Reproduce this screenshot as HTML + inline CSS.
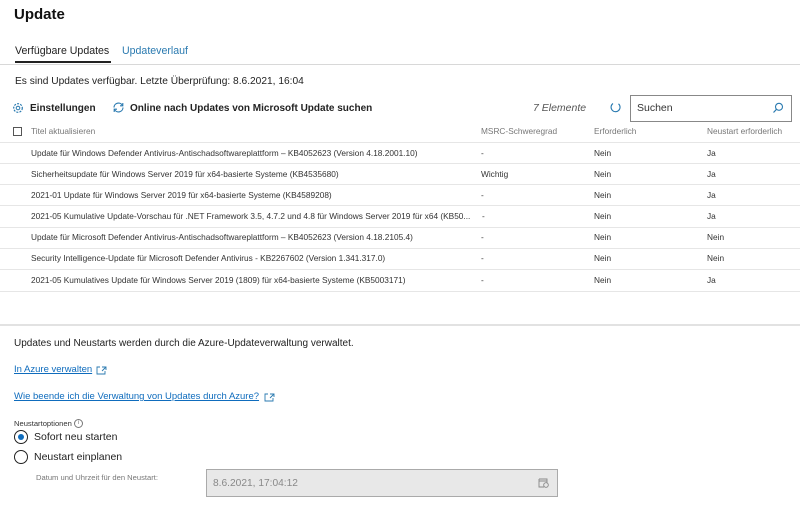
<!DOCTYPE html>
<html><head><meta charset="utf-8"><style>
*{margin:0;padding:0;box-sizing:border-box}
body{width:800px;height:507px;background:#fff;font-family:"Liberation Sans",sans-serif;color:#222;position:relative;overflow:hidden}
.a{position:absolute;white-space:nowrap}
.t{font-size:8.3px;color:#333}
.h{font-size:8.3px;color:#777}
.line{position:absolute;left:0;width:800px;height:1px;background:#e6e6e6}
a{color:#0f6cbd;text-decoration:underline}
</style></head><body>
<div class="a" style="left:14px;top:6px;font-size:15px;font-weight:bold;color:#111">Update</div>
<div class="a" style="left:15px;top:45px;font-size:10.6px;color:#222">Verfügbare Updates</div>
<div class="a" style="left:15px;top:61px;width:96px;height:2px;background:#222"></div>
<div class="a" style="left:122px;top:45px;font-size:10.6px;color:#2a7ab0">Updateverlauf</div>
<div class="line" style="top:64px;background:#d8d8d8"></div>
<div class="a" style="left:15px;top:76px;font-size:10.2px;color:#222">Es sind Updates verfügbar. Letzte Überprüfung: 8.6.2021, 16:04</div>
<svg class="a" style="left:12px;top:102px" width="12" height="12" viewBox="0 0 12 12"><circle cx="6" cy="6" r="4.3" fill="none" stroke="#2a7ab0" stroke-width="1.2" stroke-dasharray="2 1.2"/><circle cx="6" cy="6" r="1.8" fill="none" stroke="#2a7ab0"/></svg>
<div class="a" style="left:30px;top:103px;font-size:10px;font-weight:bold;color:#222">Einstellungen</div>
<svg class="a" style="left:112px;top:101px" width="13" height="13" viewBox="0 0 13 13"><path d="M2 6.5A4.5 4.5 0 0 1 10.5 4.5M11 6.5A4.5 4.5 0 0 1 2.5 8.5" fill="none" stroke="#2a7ab0" stroke-width="1.1"/><path d="M10.8 2v2.8H8M2.2 11V8.2H5" fill="none" stroke="#2a7ab0" stroke-width="1.1"/></svg>
<div class="a" style="left:130px;top:103px;font-size:10px;font-weight:bold;color:#222">Online nach Updates von Microsoft Update suchen</div>
<div class="a" style="left:533px;top:102px;font-size:10.5px;font-style:italic;color:#555">7 Elemente</div>
<svg class="a" style="left:609px;top:101px" width="13" height="13" viewBox="0 0 13 13"><path d="M9.5 2.8A4.5 4.5 0 1 1 4 2.5" fill="none" stroke="#2a7ab0" stroke-width="1.1"/></svg>
<div class="a" style="left:630px;top:95px;width:162px;height:27px;border:1px solid #888;background:#fff"></div>
<div class="a" style="left:637px;top:102px;font-size:10.5px;color:#333">Suchen</div>
<svg class="a" style="left:772px;top:102px" width="12" height="12" viewBox="0 0 12 12"><circle cx="7" cy="4.8" r="3.5" fill="none" stroke="#2a7ab0" stroke-width="1.1"/><path d="M4.5 7.3L1.5 10.5" stroke="#2a7ab0" stroke-width="1.2"/></svg>
<div class="a" style="left:13px;top:127px;width:9px;height:9px;border:1px solid #555"></div>
<div class="a h" style="left:31px;top:126px">Titel aktualisieren</div>
<div class="a h" style="left:481px;top:126px">MSRC-Schweregrad</div>
<div class="a h" style="left:594px;top:126px">Erforderlich</div>
<div class="a h" style="left:707px;top:126px">Neustart erforderlich</div>
<div class="line" style="top:142px"></div>
<div class="line" style="top:163px"></div>
<div class="line" style="top:184px"></div>
<div class="line" style="top:205px"></div>
<div class="line" style="top:227px"></div>
<div class="line" style="top:248px"></div>
<div class="line" style="top:269px"></div>
<div class="line" style="top:291px"></div>
<div class="a t" style="left:31px;top:148px">Update für Windows Defender Antivirus-Antischadsoftwareplattform – KB4052623 (Version 4.18.2001.10)</div>
<div class="a t" style="left:31px;top:169px">Sicherheitsupdate für Windows Server 2019 für x64-basierte Systeme (KB4535680)</div>
<div class="a t" style="left:31px;top:190px">2021-01 Update für Windows Server 2019 für x64-basierte Systeme (KB4589208)</div>
<div class="a t" style="left:31px;top:211px">2021-05 Kumulative Update-Vorschau für .NET Framework 3.5, 4.7.2 und 4.8 für Windows Server 2019 für x64 (KB50...</div>
<div class="a t" style="left:31px;top:232px">Update für Microsoft Defender Antivirus-Antischadsoftwareplattform – KB4052623 (Version 4.18.2105.4)</div>
<div class="a t" style="left:31px;top:253px">Security Intelligence-Update für Microsoft Defender Antivirus - KB2267602 (Version 1.341.317.0)</div>
<div class="a t" style="left:31px;top:275px">2021-05 Kumulatives Update für Windows Server 2019 (1809) für x64-basierte Systeme (KB5003171)</div>
<div class="a t" style="left:481px;top:148px">-</div><div class="a t" style="left:594px;top:148px">Nein</div><div class="a t" style="left:707px;top:148px">Ja</div>
<div class="a t" style="left:481px;top:169px">Wichtig</div><div class="a t" style="left:594px;top:169px">Nein</div><div class="a t" style="left:707px;top:169px">Ja</div>
<div class="a t" style="left:481px;top:190px">-</div><div class="a t" style="left:594px;top:190px">Nein</div><div class="a t" style="left:707px;top:190px">Ja</div>
<div class="a t" style="left:482px;top:211px">-</div><div class="a t" style="left:594px;top:211px">Nein</div><div class="a t" style="left:707px;top:211px">Ja</div>
<div class="a t" style="left:481px;top:232px">-</div><div class="a t" style="left:594px;top:232px">Nein</div><div class="a t" style="left:707px;top:232px">Nein</div>
<div class="a t" style="left:481px;top:253px">-</div><div class="a t" style="left:594px;top:253px">Nein</div><div class="a t" style="left:707px;top:253px">Nein</div>
<div class="a t" style="left:481px;top:275px">-</div><div class="a t" style="left:594px;top:275px">Nein</div><div class="a t" style="left:707px;top:275px">Ja</div>
<div class="line" style="top:324px;height:2px;background:#e2e2e2"></div>
<div class="a" style="left:14px;top:338px;font-size:10px;color:#222">Updates und Neustarts werden durch die Azure-Updateverwaltung verwaltet.</div>
<div class="a" style="left:14px;top:364px;font-size:9.5px"><a>In Azure verwalten</a></div>
<svg class="a" style="left:96px;top:366px" width="11" height="9" viewBox="0 0 11 9"><path d="M4 1H1v7h8V5M6 1h4v3M10 1L6 5" fill="none" stroke="#2a7ab0" stroke-width="0.9"/></svg>
<div class="a" style="left:14px;top:391px;font-size:9.5px"><a>Wie beende ich die Verwaltung von Updates durch Azure?</a></div>
<svg class="a" style="left:264px;top:393px" width="11" height="9" viewBox="0 0 11 9"><path d="M4 1H1v7h8V5M6 1h4v3M10 1L6 5" fill="none" stroke="#2a7ab0" stroke-width="0.9"/></svg>
<div class="a" style="left:14px;top:419px;font-size:7.6px;color:#333">Neustartoptionen</div>
<div class="a" style="left:74px;top:419px;width:9px;height:9px;border:1px solid #777;border-radius:50%;font-size:6px;text-align:center;line-height:7px;color:#777">i</div>
<div class="a" style="left:14px;top:430px;width:14px;height:14px;border:1px solid #222;border-radius:50%"></div>
<div class="a" style="left:18px;top:434px;width:6px;height:6px;background:#0f6cbd;border-radius:50%"></div>
<div class="a" style="left:34px;top:431px;font-size:10.5px;color:#222">Sofort neu starten</div>
<div class="a" style="left:14px;top:450px;width:14px;height:14px;border:1px solid #222;border-radius:50%"></div>
<div class="a" style="left:34px;top:451px;font-size:10.5px;color:#222">Neustart einplanen</div>
<div class="a" style="left:36px;top:473px;font-size:7.6px;color:#777">Datum und Uhrzeit für den Neustart:</div>
<div class="a" style="left:206px;top:469px;width:352px;height:28px;border:1px solid #aaa;background:#e8e8e8"></div>
<div class="a" style="left:213px;top:478px;font-size:10.2px;color:#888">8.6.2021, 17:04:12</div>
<svg class="a" style="left:538px;top:477px" width="11" height="11" viewBox="0 0 11 11"><path d="M1 2h8v4M1 2v8h5M1 4h8" fill="none" stroke="#888" stroke-width="0.9"/><circle cx="8" cy="8" r="2.3" fill="none" stroke="#888" stroke-width="0.9"/></svg>
</body></html>
